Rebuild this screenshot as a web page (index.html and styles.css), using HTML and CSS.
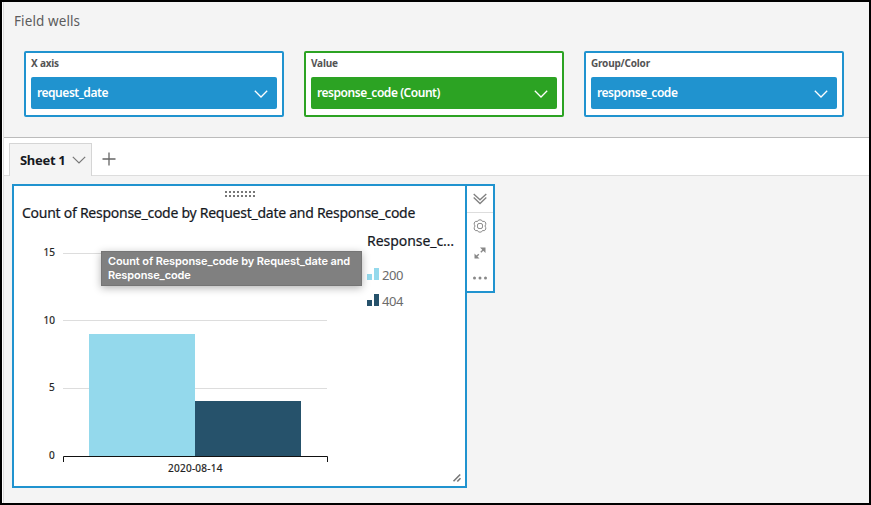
FILE: index.html
```html
<!DOCTYPE html>
<html lang="en">
<head>
<meta charset="utf-8">
<title>Field wells</title>
<link rel="stylesheet" href="styles.css">
</head>
<body>
<div class="app">
  <section class="wells">
    <h1 class="wells-title">Field wells</h1>
    <div class="well-list">
      <div class="well">
        <div class="well-label">X axis</div>
        <div class="pill"><span>request_date</span><svg width="14" height="8" viewBox="0 0 14 8"><path d="M.8 .8 7 7 13.2 .8"/></svg></div>
      </div>
      <div class="well green">
        <div class="well-label">Value</div>
        <div class="pill"><span>response_code (Count)</span><svg width="14" height="8" viewBox="0 0 14 8"><path d="M.8 .8 7 7 13.2 .8"/></svg></div>
      </div>
      <div class="well">
        <div class="well-label">Group/Color</div>
        <div class="pill"><span>response_code</span><svg width="14" height="8" viewBox="0 0 14 8"><path d="M.8 .8 7 7 13.2 .8"/></svg></div>
      </div>
    </div>
  </section>
  <nav class="tabs">
    <div class="tab"><span>Sheet 1</span><svg width="14" height="8" viewBox="0 0 14 8"><path d="M.8 .8 7 7 13.2 .8"/></svg></div>
    <svg class="plus" width="14" height="14" viewBox="0 0 14 14"><path d="M7 .5V13.5M.5 7H13.5"/></svg>
  </nav>
  <main class="canvas">
    <article class="visual">
      <svg class="grip" width="30" height="6" viewBox="0 0 30 6"><path d="M0 1H30M0 5H30"/></svg>
      <h2 class="visual-title">Count of Response_code by Request_date and Response_code</h2>
      <div class="visual-body">
        <svg class="chart" width="320" height="250" viewBox="0 0 320 250">
          <path class="grid" d="M49 23.5H313M49 90.5H313M49 158.5H313"/>
          <rect x="75" y="104" width="106" height="122" fill="#94d9ec"/>
          <rect x="181" y="171" width="106" height="55" fill="#26526b"/>
          <path class="axis" d="M49.5 232V226.5H313.5V232"/>
          <g class="ticks">
            <text x="29.5" y="26" textLength="11.5">15</text>
            <text x="29.5" y="94" textLength="11.5">10</text>
            <text x="35" y="161">5</text>
            <text x="35" y="229">0</text>
            <text x="154" y="242" textLength="54.5">2020-08-14</text>
          </g>
        </svg>
        <aside class="legend">
          <h3 class="legend-title">Response_c…</h3>
          <div class="legend-item light"><svg width="12" height="12" viewBox="0 0 12 12"><path d="M0 6H5V12H0ZM7 0H12V12H7Z"/></svg><span>200</span></div>
          <div class="legend-item dark"><svg width="12" height="12" viewBox="0 0 12 12"><path d="M0 6H5V12H0ZM7 0H12V12H7Z"/></svg><span>404</span></div>
        </aside>
      </div>
      <div class="tooltip">Count of Response_code by Request_date and<br>Response_code</div>
      <svg class="resize" width="10" height="10" viewBox="0 0 10 10"><path d="M1.5 8.2 8.2 1.5M5.3 8.5 8.5 5.3"/></svg>
    </article>
    <div class="menu">
      <div class="menu-top"><svg width="14" height="12" viewBox="0 0 14 12"><path d="M.7 1 7 6.8 13.3 1M.7 4.5 7 10.5 13.3 4.5"/></svg></div>
      <svg class="gear" width="14" height="14" viewBox="0 0 14 14"><path d="M4.6 2.4Q5 .8 7 .8T9.4 2.4Q12 1.6 12.8 4 13 5.4 12 7 13 8.6 12.8 10 12 12.4 9.4 11.6 9 13.2 7 13.2T4.6 11.6Q2 12.4 1.2 10 1 8.6 2 7 1 5.4 1.2 4 2 1.6 4.6 2.4Z"/><rect x="4.5" y="4.5" width="5" height="5" rx="1.6"/></svg>
      <svg class="expand" width="12" height="12" viewBox="0 0 12 12"><path class="fill" d="M6 .5H11.5V6ZM.5 6.5V11.5H5.5Z"/><path d="M9.8 2.2 6.8 5.2M4.8 7.2 2.2 9.8"/></svg>
      <svg class="dots" width="14" height="4" viewBox="0 0 14 4"><circle cx="1.5" cy="2" r="1.5"/><circle cx="7" cy="2" r="1.5"/><circle cx="12.5" cy="2" r="1.5"/></svg>
    </div>
  </main>
</div>
</body>
</html>
```
FILE: styles.css
```css
* { box-sizing: border-box; }
body { margin: 0; font-family: "Noto Sans", "Open Sans", sans-serif; color: #16191f; }
h1, h2, h3 { margin: 0; font-weight: 400; white-space: nowrap; }
svg { display: block; flex: none; fill: none; }
.app { width: 871px; height: 505px; border: 2px solid #000; background: #f4f4f4; display: flex; flex-direction: column; box-shadow: inset 1px 0 #fff, inset 2px 0 #ddd; }
.wells { height: 136px; padding: 9px 0 0 20px; border-bottom: 1px solid #bbb; margin-left: 2px; }
.wells-title { margin-left: -10px; font-size: 13.5px; line-height: 20px; letter-spacing: .1px; color: #5c5c5c; }
.well-list { display: flex; gap: 20px; margin-top: 20px; }
.well { width: 260px; height: 66px; border: 2px solid #2093cf; border-radius: 2px; background: #fff; padding: 3px 5px; --c: #2093cf; }
.green { border-color: #2ca323; --c: #2ca323; }
.well-label { height: 21px; font-size: 10px; line-height: 14px; font-weight: 700; letter-spacing: -.2px; color: #545454; white-space: nowrap; }
.pill { height: 32px; background: var(--c); border-radius: 2px; color: #fff; display: flex; align-items: center; justify-content: space-between; padding: 0 9px 0 6px; font-size: 12px; font-weight: 600; letter-spacing: -.46px; white-space: nowrap; }
.pill span { margin-top: -1px; }
.pill svg { margin-top: 2px; stroke: #fff; stroke-width: 1.3; }
.tabs { height: 38px; margin-left: 2px; background: #fff; border-bottom: 1px solid #ddd; display: flex; align-items: flex-end; padding-left: 5px; }
.tab { width: 83px; height: 33px; margin-bottom: -1px; border: 1px solid #d5d5d5; border-bottom: 0; background: #f4f4f4; display: flex; align-items: center; justify-content: space-between; padding: 0 5px 0 10px; font-size: 13px; font-weight: 700; letter-spacing: -.3px; white-space: nowrap; }
.tab svg { margin-top: -1px; stroke: #777; stroke-width: 1.2; }
.plus { margin: 0 0 9px 10px; stroke: #666; stroke-width: 1.3; }
.canvas { display: flex; align-items: flex-start; padding: 8px 0 0 10px; }
.visual { position: relative; width: 455px; height: 304px; border: 2px solid #2093cf; background: #fff; padding-top: 5px; }
.grip { margin-left: 211px; stroke: #777; stroke-width: 2; stroke-dasharray: 2 2; }
.visual-title { font-size: 14px; line-height: 20px; letter-spacing: -.26px; margin: 6px 0 0 8px; -webkit-text-stroke: .2px #16191f; }
.visual-body { display: flex; padding-top: 7px; }
.grid { stroke: #ddd; }
.axis { stroke: #111; }
.ticks { fill: #222; font-size: 10px; stroke: #222; stroke-width: .2px; }
.legend { margin-left: 33px; }
.legend-title { font-size: 14px; line-height: 20px; margin-top: 1px; letter-spacing: -.05px; -webkit-text-stroke: .2px #16191f; }
.legend-item { display: flex; align-items: center; gap: 3px; height: 26px; font-size: 13px; letter-spacing: -.4px; color: #6b6b6b; }
.legend-title + .legend-item { margin-top: 11px; }
.legend-item svg { margin-top: -2px; }
.light svg { fill: #94d9ec; }
.dark svg { fill: #26526b; }
.tooltip { position: absolute; left: 87px; top: 65px; width: 261px; height: 35px; padding: 2px 6px; background: #808080; border: 1px solid #757575; box-shadow: 0 2px 8px rgba(0,0,0,.3); color: #fff; font: 600 11px/14px Inter, sans-serif; letter-spacing: -.1px; white-space: nowrap; }
.resize { position: absolute; right: 3px; bottom: 3px; stroke: #777; stroke-width: 1.6; }
.menu { width: 30px; height: 109px; margin-left: -2px; position: relative; border: 2px solid #2093cf; background: #fff; display: flex; flex-direction: column; align-items: center; stroke: #888; }
.menu-top { width: 26px; height: 27px; border-bottom: 1px solid #ddd; display: flex; justify-content: center; padding-top: 7px; stroke: #808080; stroke-width: 1.3; }
.gear { margin-top: 6px; }
.expand { margin-top: 14px; stroke-width: 1.4; }
.fill { fill: #888; stroke: none; }
.dots { margin-top: 17px; fill: #888; stroke: none; }
```
